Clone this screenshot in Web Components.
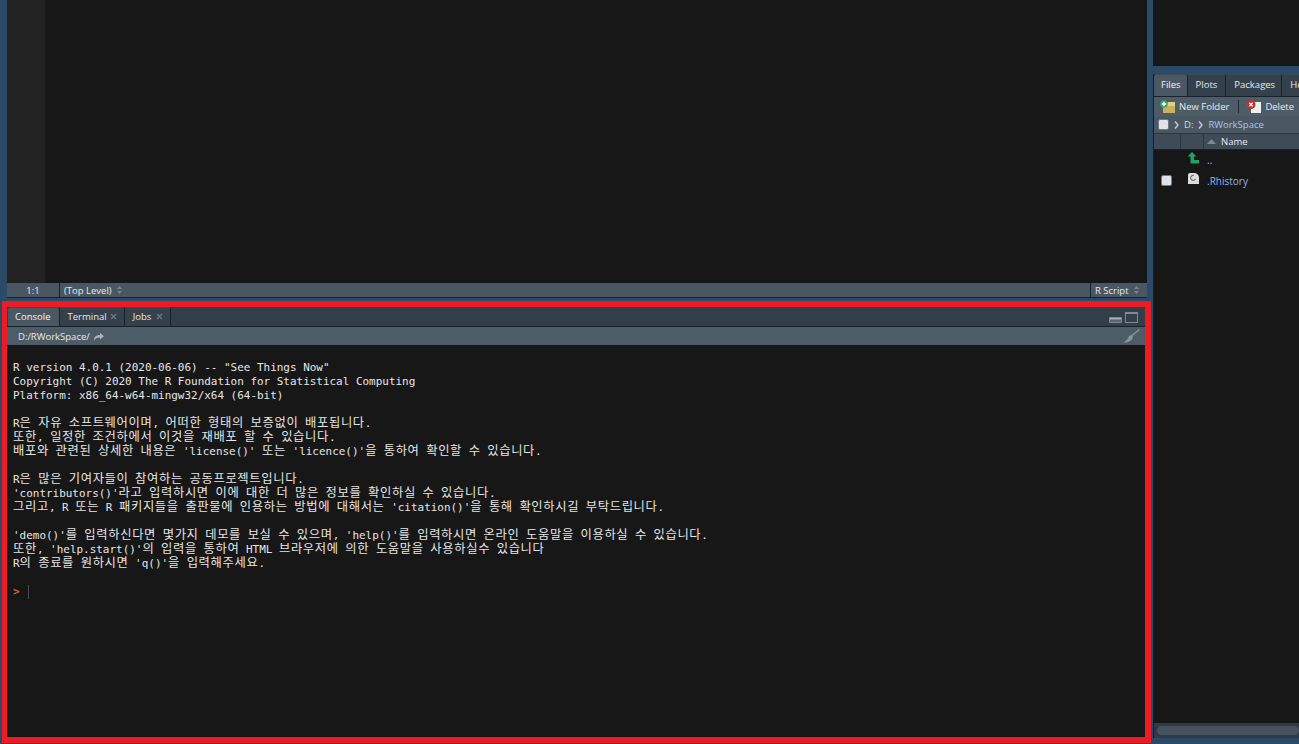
<!DOCTYPE html>
<html><head><meta charset="utf-8"><style>
html,body{margin:0;height:744px;overflow:hidden;background:#2b4a67}
body{font-family:"Open Sans","Noto Sans",sans-serif}
</style></head><body>
<rs-app>
  <rs-editor slot="editor"></rs-editor>
  <rs-console slot="console">R version 4.0.1 (2020-06-06) -- "See Things Now"
Copyright (C) 2020 The R Foundation for Statistical Computing
Platform: x86_64-w64-mingw32/x64 (64-bit)

R은 자유 소프트웨어이며, 어떠한 형태의 보증없이 배포됩니다.
또한, 일정한 조건하에서 이것을 재배포 할 수 있습니다.
배포와 관련된 상세한 내용은 'license()' 또는 'licence()'을 통하여 확인할 수 있습니다.

R은 많은 기여자들이 참여하는 공동프로젝트입니다.
'contributors()'라고 입력하시면 이에 대한 더 많은 정보를 확인하실 수 있습니다.
그리고, R 또는 R 패키지들을 출판물에 인용하는 방법에 대해서는 'citation()'을 통해 확인하시길 부탁드립니다.

'demo()'를 입력하신다면 몇가지 데모를 보실 수 있으며, 'help()'를 입력하시면 온라인 도움말을 이용하실 수 있습니다.
또한, 'help.start()'의 입력을 통하여 HTML 브라우저에 의한 도움말을 사용하실수 있습니다
R의 종료를 원하시면 'q()'을 입력해주세요.
</rs-console>
  <rs-files slot="files"></rs-files>
</rs-app>
<script>
function def(name, html, init){
  customElements.define(name, class extends HTMLElement{
    constructor(){super();this.attachShadow({mode:'open'}).innerHTML=html;}
    connectedCallback(){ if(init) init(this); }
  });
}
def('rs-tab',`<style>
:host{display:flex;align-items:center;gap:3px;height:100%;box-sizing:border-box;padding:0 8px 2px 8px;font-size:9.5px;color:#e6eaee;background:#34404a;border-right:1px solid #16232f;white-space:nowrap;border-top:1px solid #3e4a54}
:host([active]){background:#4a5863;color:#f2f4f6;border-top-left-radius:3px;border-top-right-radius:3px;padding-left:7px;padding-right:8px}
:host([closable]){padding-right:7px}
svg{display:none;width:7px;height:7px}
:host([closable]) svg{display:block}
</style><slot></slot><svg viewBox="0 0 7 7"><path d="M1 1l5 5M6 1L1 6" stroke="#6d7882" stroke-width="1.4"/></svg>`);
def('rs-app',`<style>
:host{display:grid;grid-template-columns:1151px 1fr;column-gap:2px;height:744px}
.l{display:flex;flex-direction:column;min-width:0}
.r{min-width:0;overflow:hidden}
</style><div class="l"><slot name="editor"></slot><slot name="console"></slot></div><div class="r"><slot name="files"></slot></div>`);
def('rs-editor',`<style>
:host{display:flex;flex-direction:column;height:298px;margin:0 4px 3px 7px;box-sizing:border-box;background:#171717;font-size:9.5px;color:#e6eaee}
.code{flex:1;display:flex}
.gut{width:38px;background:#222222}
.bar{height:15px;background:#4a5762;display:flex;align-items:center;border-bottom:1px solid #12202c;box-sizing:border-box}
.pos{width:53px;text-align:center;border-right:1px solid #16232f;height:100%;line-height:15px;box-sizing:border-box}
.lvl{flex:1;padding-left:4px;display:flex;gap:5px;align-items:center}
.typ{width:57px;border-left:1px solid #16232f;height:100%;display:flex;gap:5px;align-items:center;padding-left:4px;box-sizing:border-box}
svg{width:5px;height:8px}
</style><div class="code"><div class="gut"></div></div>
<div class="bar"><div class="pos">1:1</div><div class="lvl">(Top Level)<svg viewBox="0 0 5 8"><path d="M2.5 0L5 3H0zM2.5 8L0 5h5z" fill="#78838d"/></svg></div><div class="typ">R Script<svg viewBox="0 0 5 8"><path d="M2.5 0L5 3H0zM2.5 8L0 5h5z" fill="#78838d"/></svg></div></div>`);
def('rs-console',`<style>
:host{display:flex;flex-direction:column;height:442px;width:1149px;margin-left:2px;box-sizing:border-box;border:solid #ed1c24;border-width:6px 6px 6px 5px;background:#171717}
.tabs{height:20px;display:flex;background:#323e48;border-bottom:1px solid #16232f;box-sizing:border-box;align-items:stretch;padding-left:1px}
.sp{flex:1}
.win{display:flex;align-items:flex-end;gap:3px;padding:0 7px 3px 0}
.path{height:18px;background:#4e5c67;display:flex;align-items:center;padding:1px 0 0 11px;font-size:9.5px;color:#e6eaee;gap:3px;box-sizing:border-box}
.path .g{flex:1}
.brush{margin:0 5px 1px 0}
pre{margin:0;padding:16px 0 0 6px;font:10.96px/14px "DejaVu Sans Mono","Noto Sans CJK KR",monospace;color:#e6e6e6;white-space:pre}
::slotted(.k){font-family:"Liberation Mono","Noto Sans CJK KR",sans-serif;font-size:12.3px;letter-spacing:.64px;line-height:0}
.pr{height:14px;margin:14px 0 0 6px;display:flex;align-items:center;font:bold 11px/14px "DejaVu Sans Mono",monospace;color:#c8691a}
.cur{width:1px;height:14px;background:#4a4a4a;margin-left:8px}
</style>
<div class="tabs"><rs-tab active>Console</rs-tab><rs-tab closable>Terminal</rs-tab><rs-tab closable style="gap:5px">Jobs</rs-tab><div class="sp"></div>
<div class="win"><svg width="13" height="6" viewBox="0 0 13 6"><rect x="0" y="0" width="13" height="6" rx="1" fill="#7b8791"/><rect x="1" y="1" width="11" height="1" fill="#aab3ba"/><rect x="1" y="3" width="11" height="2" fill="#5a6670"/></svg><svg width="13" height="11" viewBox="0 0 13 11"><rect x="0.5" y="0.5" width="12" height="10" fill="none" stroke="#7f8a94"/><rect x="0" y="0" width="13" height="2" fill="#7f8a94"/></svg></div></div>
<div class="path">D:/RWorkSpace/<svg width="11" height="8" viewBox="0 0 11 8"><path d="M7 0l4 3.2L7 6.4V4.4C4 4.4 2 5 1 8 .8 4 3 2 7 2z" fill="#aab3ba"/></svg><div class="g"></div>
<svg class="brush" width="17" height="14" viewBox="0 0 17 14"><path d="M16.5 0.500L9 6.500" stroke="#8a949d" stroke-width="1.200"/><path d="M9.500 6C10.500 8 9.500 10.500 7 12 4.500 13.500 2 13.800 0 13.500 3 12.500 5 9.500 6.500 6.500z" fill="#8a949d"/></svg></div>
<pre><slot></slot></pre><div class="pr">&gt;<span class="cur"></span></div>`, el=>{
  if(el.dataset.done) return; el.dataset.done='1';
  const lines=el.textContent.replace(/\n$/,'').split('\n');
  el.textContent='';
  lines.forEach(line=>{
    line.split(/([\uAC00-\uD7A3]+)/).forEach((p,i)=>{
      if(!p) return;
      if(i%2){const s=document.createElement('span');s.className='k';s.textContent=p;el.appendChild(s);}
      else el.appendChild(document.createTextNode(p));
    });
    el.appendChild(document.createElement('br'));
  });
});
def('rs-files',`<style>
:host{display:flex;flex-direction:column;height:744px;background:#2b4a67;font-size:9.5px;color:#e6eaee;overflow:hidden}
.top{height:66px;background:#171717;flex:none}
.pane{margin-top:8px;height:664px;background:#171717;display:flex;flex-direction:column;border-left:1px solid #12202c;box-sizing:border-box;flex:none;width:146px;overflow:hidden}
.tabs{height:23px;display:flex;background:#323e48;border-bottom:1px solid #16232f;box-sizing:border-box;flex:none}
.tb{height:19px;background:#4e5c67;display:flex;align-items:center;padding-left:6px;font-size:9.5px;white-space:nowrap;box-sizing:border-box;flex:none}
.sep{width:1px;height:13px;background:#1e2a34;margin:0 7px 0 9px}
.tb svg{margin-right:3px;flex:none}
.crumb{height:17px;background:#4a5863;display:flex;align-items:center;padding-left:4px;gap:5px;color:#d5dadf;flex:none}
.crumb b{font-weight:400;color:#a9c4ee}
.chk{width:9px;height:9px;background:#dfe3e7;border:1px solid #6e7a84;border-radius:2px;flex:none;box-sizing:content-box}
.hdr{height:17px;display:grid;grid-template-columns:27px 23px 1fr;background:#3f4c57;border-top:1px solid #2a3641;border-bottom:1px solid #16232f;box-sizing:border-box;flex:none}
.hdr>div{border-right:1px solid #2a3641;display:flex;align-items:center;gap:4px;padding-left:6px}
.hdr>div:last-child{border:0;padding-left:3px;gap:5px}
.row{height:21px;display:grid;grid-template-columns:27px 23px 1fr;align-items:center;color:#8fb4ea;flex:none}
.row>*{justify-self:start}
.row .chk{margin-left:7px}
.row svg{margin:-4px 0 0 6px}
.list{flex:1;margin-top:-1px}
.name{margin-left:3px;font-size:10px}
.sc{height:15px;background:#2f3a44;display:flex;align-items:center;padding-left:3px;flex:none}
.sc i{display:block;height:9px;width:100%;background:#46525d;border-radius:5px}
</style>
<div class="top"></div>
<div class="pane">
<div class="tabs"><rs-tab active style="padding-right:6px">Files</rs-tab><rs-tab>Plots</rs-tab><rs-tab style="padding-right:6px">Packages</rs-tab><rs-tab style="border-right:0;padding-right:0">He</rs-tab></div>
<div class="tb"><svg width="16" height="14" viewBox="0 0 16 14"><path d="M3 4h4l1-2h7v11H3z" fill="#e0cf8a"/><path d="M3 6h12v7H3z" fill="#c9b25c"/><circle cx="4" cy="4" r="3.800" fill="#38a26a"/><path d="M4 1.800v4.400M1.800 4h4.400" stroke="#fff" stroke-width="1.300"/></svg>New Folder<span class="sep"></span><svg width="16" height="14" viewBox="0 0 16 14"><path d="M5 2h10v11H5z" fill="#eef0f2"/><circle cx="5" cy="4.500" r="4.500" fill="#c8302c"/><path d="M3.300 2.800l3.400 3.400M6.700 2.800l-3.400 3.400" stroke="#fff" stroke-width="1.300"/></svg>Delete</div>
<div class="crumb"><span class="chk"></span><svg width="5" height="8" viewBox="0 0 5 8"><path d="M1 0.500l3 3.500-3 3.500" fill="none" stroke="#c4cbd1" stroke-width="1.400"/></svg><span>D:</span><svg width="5" height="8" viewBox="0 0 5 8"><path d="M1 0.500l3 3.500-3 3.500" fill="none" stroke="#c4cbd1" stroke-width="1.400"/></svg><b>RWorkSpace</b></div>
<div class="hdr"><div></div><div></div><div><svg width="9" height="5" viewBox="0 0 9 5"><path d="M4.500 0L9 5H0z" fill="#7d8993"/></svg>Name</div></div>
<div class="list">
<div class="row"><span></span><svg width="12" height="12" viewBox="0 0 12 12"><path d="M5 0L9.500 4.500H7V8h5v3.500H3.500V4.500H.500z" fill="#21a366"/></svg><span class="name">..</span></div>
<div class="row"><span class="chk"></span><svg width="13" height="13" viewBox="0 0 13 13"><path d="M1 3Q1 1 3 1h5q4 1 4 5v6H1z" fill="#dcdcdc"/><path d="M8.500 7A2.500 2.500 0 1 1 7 3.500" fill="none" stroke="#777" stroke-width="1.200"/></svg><span class="name">.Rhistory</span></div>
</div>
<div class="sc"><i></i></div>
</div>`);
</script>
</body></html>
